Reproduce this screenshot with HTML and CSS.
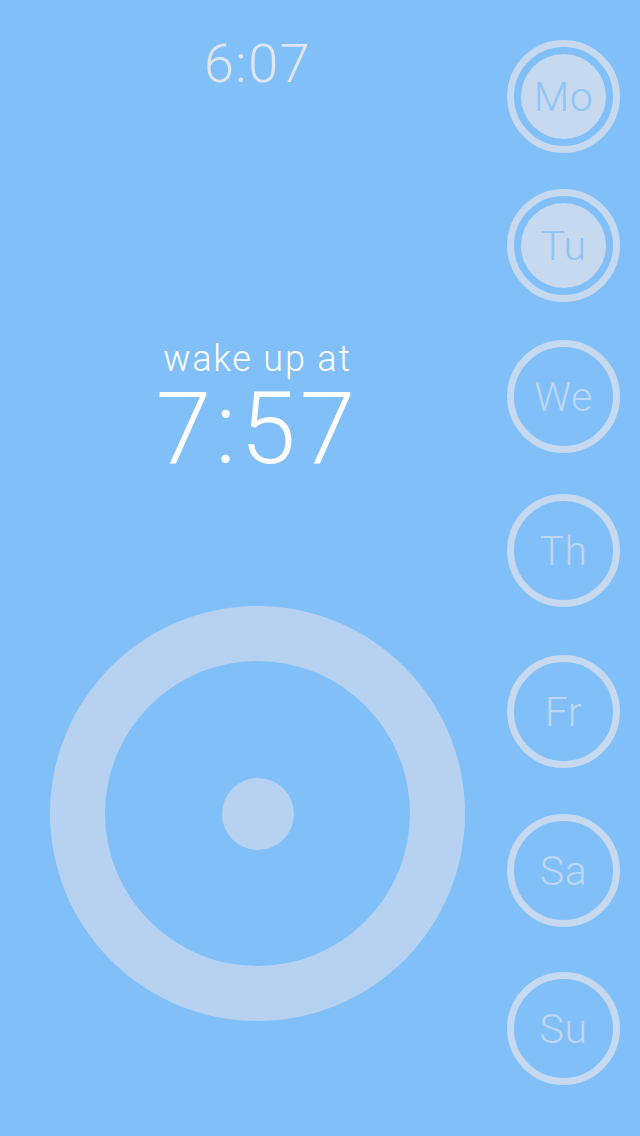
FILE: index.html
```html
<!DOCTYPE html>
<html>
<head>
<meta charset="utf-8">
<link rel="stylesheet" href="styles.css">
</head>
<body>
<div class="screen">
  <main class="main">
    <div class="now">6:07</div>
    <div class="wake">
      <div class="wake-label">wake up at</div>
      <div class="wake-time">7:57</div>
    </div>
    <div class="dial">
      <div class="dial-inner">
        <div class="dial-dot"></div>
      </div>
    </div>
  </main>
  <aside class="days">
    <div class="day on"><span class="day-fill">Mo</span></div>
    <div class="day on"><span class="day-fill">Tu</span></div>
    <div class="day"><span class="day-fill">We</span></div>
    <div class="day"><span class="day-fill">Th</span></div>
    <div class="day"><span class="day-fill">Fr</span></div>
    <div class="day"><span class="day-fill">Sa</span></div>
    <div class="day"><span class="day-fill">Su</span></div>
  </aside>
</div>
</body>
</html>
```

FILE: styles.css
```css
html, body {
  margin: 0;
  padding: 0;
}
body {
  background: #81bff9;
  font-family: Roboto, "Liberation Sans", sans-serif;
  font-weight: 300;
}
.screen {
  width: 640px;
  height: 1136px;
  display: flex;
  overflow: hidden;
}
.main {
  flex: 0 0 515px;
  width: 515px;
  display: flex;
  flex-direction: column;
  align-items: center;
}
.now {
  margin-top: 34px;
  font-size: 54px;
  line-height: 60px;
  color: #dfe6ef;
  letter-spacing: 1.5px;
}
.wake {
  margin-top: 245px;
  display: flex;
  flex-direction: column;
  align-items: center;
  color: #ffffff;
}
.wake-label {
  font-size: 36px;
  line-height: 40px;
  letter-spacing: 1.8px;
}
.wake-time {
  font-size: 100px;
  line-height: 100px;
  letter-spacing: 4px;
}
.dial {
  margin-top: 127px;
  width: 415px;
  height: 415px;
  flex: 0 0 415px;
  border-radius: 50%;
  background: #b6d2f0;
  display: flex;
  align-items: center;
  justify-content: center;
}
.dial-inner {
  width: 305px;
  height: 305px;
  border-radius: 50%;
  background: #81bff9;
  display: flex;
  align-items: center;
  justify-content: center;
}
.dial-dot {
  width: 72px;
  height: 72px;
  border-radius: 50%;
  background: #b6d2f0;
}
.days {
  flex: 1 1 auto;
  margin-left: -8px;
  display: flex;
  flex-direction: column;
  align-items: flex-start;
  padding-top: 40px;
}
.day {
  width: 113px;
  height: 113px;
  flex: 0 0 113px;
  box-sizing: border-box;
  border: 7px solid #c6d9ef;
  border-radius: 50%;
  display: flex;
  align-items: center;
  justify-content: center;
}
.day + .day { margin-top: 36px; }
.day:nth-child(3) { margin-top: 38px; }
.day:nth-child(4) { margin-top: 41px; }
.day:nth-child(5) { margin-top: 48px; }
.day:nth-child(6) { margin-top: 46px; }
.day:nth-child(7) { margin-top: 45px; }
.day-fill {
  width: 85px;
  height: 85px;
  border-radius: 50%;
  display: flex;
  align-items: center;
  justify-content: center;
  font-size: 41px;
  letter-spacing: 0.5px;
  color: #bed6f0;
}
.day.on .day-fill {
  background: #c6d9ef;
  color: #8ec4f6;
}
```
